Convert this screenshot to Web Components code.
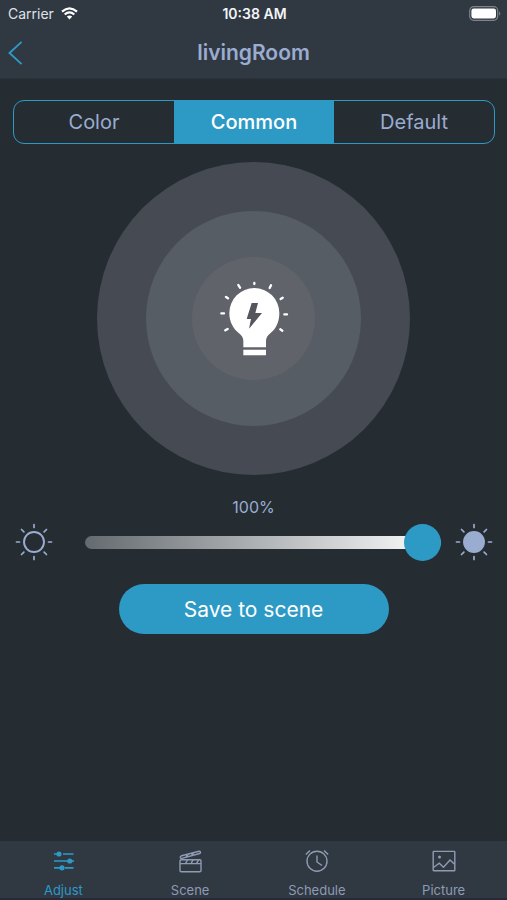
<!DOCTYPE html>
<html lang="en">
<head>
<meta charset="utf-8">
<meta name="viewport" content="width=device-width, initial-scale=1">
<title>livingRoom</title>
<style>
  :root {
    --page: #252d33;
    --bar: #303842;
    --accent: #2d9ac6;
    --text: #9aacd0;
    --muted: #8e9bb3;
  }
  html, body { margin: 0; }
  body {
    background: var(--page);
    color: var(--text);
    font-family: Inter, Roboto, "Liberation Sans", sans-serif;
  }
</style>
</head>
<body>
<light-app></light-app>

<script>
  const define = (name, html, setup) => {
    const template = document.createElement('template');
    template.innerHTML = html;
    customElements.define(name, class extends HTMLElement {
      constructor() {
        super();
        this.attachShadow({ mode: 'open' }).append(template.content.cloneNode(true));
      }
      connectedCallback() {
        if (setup && !this.ready) { this.ready = true; setup(this, this.shadowRoot); }
      }
    });
  };

  define('status-bar', `
    <style>
      :host { display: grid; grid-template-columns: 1fr auto 1fr; align-items: center; height: 27px; padding: 0 6px 0 8px; color: #f2f4f7; font-size: 14px; line-height: 16px; }
      .carrier { display: flex; align-items: center; gap: 7px; color: #dfe3e8; }
      .time { font-weight: 600; }
      .battery { justify-self: end; }
      svg { display: block; }
    </style>
    <div class="carrier"><span>Carrier</span>
      <svg width="17" height="13" viewBox="0 0 17 13" aria-label="Wi-Fi">
        <g fill="none" stroke="#fff" stroke-width="2.3">
          <path d="M1 4.6Q8.500-1.900 16 4.600"/><path d="M3.700 7.500Q8.500 3.300 13.300 7.500"/>
        </g>
        <path d="M8.500 12.400L5.800 9.600Q8.500 7.400 11.200 9.600Z" fill="#fff"/>
      </svg>
    </div>
    <span class="time">10:38 AM</span>
    <svg class="battery" width="32" height="15" viewBox="0 0 32 15" aria-label="Battery full">
      <rect x=".7" y=".7" width="28" height="13.600" rx="4" fill="none" stroke="#7c838b" stroke-width="1.200"/>
      <rect x="2.400" y="2.400" width="24.600" height="10" rx="2.300" fill="#fff"/>
      <path d="M30.200 5.200Q32.500 7.500 30.200 9.800Z" fill="#7c838b"/>
    </svg>`);

  define('nav-header', `
    <style>
      :host { display: grid; grid-template-columns: 1fr auto 1fr; align-items: center; height: 51px; padding: 0 8px; }
      button { justify-self: start; margin: 0; padding: 0; border: 0; background: none; color: var(--accent); cursor: pointer; }
      svg { display: block; }
      h1 { margin: 0; font-size: 21px; line-height: 24px; font-weight: 600; }
    </style>
    <button type="button" aria-label="Back"><svg width="15" height="24" viewBox="0 0 15 24" fill="none" stroke="currentColor" stroke-width="1.900"><path d="M13.600.9L1.500 12l12.100 11.100"/></svg></button>
    <h1><slot></slot></h1>`);

  define('segmented-control', `
    <style>
      :host { display: grid; grid-auto-flow: column; grid-auto-columns: 1fr; height: 42px; overflow: hidden; border: 1px solid var(--accent); border-radius: 11px; }
      button { margin: 0; padding: 0; border: 0; background: none; color: var(--text); font-family: inherit; font-size: 20px; line-height: 24px; cursor: pointer; }
      button[aria-pressed="true"] { background: var(--accent); color: #fff; font-weight: 500; }
    </style>
    <button type="button" aria-pressed="false">Color</button>
    <button type="button" aria-pressed="true">Common</button>
    <button type="button" aria-pressed="false">Default</button>`,
    (host, root) => {
      const buttons = [...root.querySelectorAll('button')];
      buttons.forEach(b => b.addEventListener('click', () =>
        buttons.forEach(o => o.setAttribute('aria-pressed', String(o === b)))));
    });

  define('light-dial', `
    <style>
      :host { display: block; width: 65%; max-width: 313px; }
      div { display: grid; place-items: center; box-sizing: border-box; aspect-ratio: 1; border-radius: 50%; }
      .outer { width: 100%; background: #464b53; }
      .middle { width: 69%; background: #575d65; }
      .inner { width: 57%; background: #61636b; }
      svg { display: block; }
    </style>
    <div class="outer"><div class="middle"><div class="inner">
      <svg width="70" height="77" viewBox="105 90 210 231" aria-label="Light on">
        <path fill="#fff" d="M211 114a75 75 0 0 1 75 75c0 28-11 48-27 61q-13 9-13 24v18h-68v-18q0-15-13-24c-16-13-29-33-29-61a75 75 0 0 1 75-75ZM178 299h68v17h-68Z"/>
        <path fill="#53565d" d="M203 159h19l-8 30h20l-39 47 6-29h-13Z"/>
        <g stroke="#fff" stroke-width="7" stroke-linecap="round"><path d="M211 99v3M163 105l5 8M261 106l-4 8M126 141l6 4M296 143l-6 4M112 190h8M301 193h8M124 241l7-4M289 238l6 4"/></g>
      </svg>
    </div></div></div>`);

  define('sun-icon', `
    <style>
      :host { display: block; }
      svg { display: block; color: var(--text); }
      circle { fill: none; }
      :host([filled]) circle { fill: currentColor; }
    </style>
    <svg width="38" height="38" viewBox="-19 -19 38 38" fill="none" stroke="currentColor" stroke-width="1.900" aria-hidden="true">
      <circle r="10"/>
      <path stroke-linecap="round" stroke-width="1.700" d="M0-17.500v3M0 14.500v3M-17.500 0h3M14.500 0h3M-12.500-12.500l2.400 2.400M12.500-12.500l-2.400 2.400M-12.500 12.500l2.400-2.400M12.500 12.500l-2.400-2.400"/>
    </svg>`);

  define('brightness-slider', `
    <style>
      :host { display: flex; flex-direction: column; }
      label { text-align: center; font-size: 16px; line-height: 20px; }
      .row { display: flex; align-items: center; padding: 0 14px 0 15px; margin-top: 6px; }
      input { -webkit-appearance: none; appearance: none; flex: 1; min-width: 0; height: 37px; margin: 0 14px 0 32px; background: none; cursor: pointer; }
      input::-webkit-slider-runnable-track { height: 13px; border-radius: 7px; background: linear-gradient(90deg, #646a6f, #fff); }
      input::-webkit-slider-thumb { -webkit-appearance: none; width: 37px; height: 37px; margin-top: -12px; border-radius: 50%; background: var(--accent); }
      input::-moz-range-track { height: 13px; border-radius: 7px; background: linear-gradient(90deg, #646a6f, #fff); }
      input::-moz-range-thumb { width: 37px; height: 37px; border: 0; border-radius: 50%; background: var(--accent); }
    </style>
    <label for="level">100%</label>
    <div class="row">
      <sun-icon></sun-icon>
      <input id="level" type="range" min="0" max="100" value="100">
      <sun-icon filled></sun-icon>
    </div>`,
    (host, root) => {
      const input = root.querySelector('input');
      input.addEventListener('input', () => { root.querySelector('label').textContent = input.value + '%'; });
    });

  define('pill-button', `
    <style>
      :host { display: block; width: 270px; max-width: 100%; }
      button { width: 100%; margin: 0; padding: 13px 24px 11px; border: 0; border-radius: 25px; background: var(--accent); color: #fff; font-family: inherit; font-size: 21px; line-height: 26px; cursor: pointer; }
    </style>
    <button type="button"><slot></slot></button>`);

  define('tab-item', `
    <style>
      :host { display: block; color: var(--muted); }
      :host([active]) { color: var(--accent); }
      a { display: flex; flex-direction: column; align-items: center; gap: 9px; padding: 8px 0 0; color: inherit; text-decoration: none; font-size: 13px; line-height: 16px; }
      ::slotted(svg) { display: block; width: 24px; height: 24px; }
    </style>
    <a href="#"><slot name="icon"></slot><span><slot></slot></span></a>`);

  define('tab-bar', `
    <style>
      :host { display: block; background: var(--bar); border-bottom: 2px solid #29283a; }
      nav { display: grid; grid-template-columns: repeat(4, 1fr); }
      svg { fill: none; stroke: currentColor; stroke-width: 1.400; }
    </style>
    <nav>
      <tab-item active>
        <svg slot="icon" viewBox="0 0 24 24"><path stroke-width="1.700" d="M3 5h5M12 5h10.500M3 12h18M20.500 12h2.500M3 18.800h7M14 18.800h8.500"/><g fill="currentColor" stroke="none"><circle cx="8" cy="5" r="2.600"/><circle cx="18.800" cy="12" r="2.600"/><circle cx="11" cy="18.800" r="2.600"/></g></svg>Adjust</tab-item>
      <tab-item>
        <svg slot="icon" viewBox="0 0 24 24"><rect x="2" y="10.800" width="21" height="12" rx="1.200"/><path d="M2 14.600h21M7.500 14.600l2-3.800M13 14.600l2-3.800M18.500 14.600l2-3.800"/><path d="M3.600 6.700L21 2.200Q22.300 2 22.500 3.200Q22.600 4.200 21.600 4.500L4 9.400Q2.500 9.600 2.200 8.400Q2.100 7.100 3.600 6.700ZM8 8l2.400-3M13.500 6.500l2.400-3"/></svg>Scene</tab-item>
      <tab-item>
        <svg slot="icon" viewBox="0 0 24 24"><circle cx="12" cy="12.200" r="10"/><path d="M12 6.500v6.500l5 3.500M.8 5.600L5 1.400M23.200 5.600L19 1.400"/></svg>Schedule</tab-item>
      <tab-item>
        <svg slot="icon" viewBox="0 0 24 24"><rect x="1.200" y="2.400" width="21.600" height="19.400" rx=".6"/><circle cx="7.500" cy="8" r="1.500" fill="currentColor" stroke="none"/><path d="M1.500 18.500l5.800-4.300 4.200 4 6.500-7.200 4.600 4.300"/></svg>Picture</tab-item>
    </nav>`);

  define('light-app', `
    <style>
      :host { display: flex; flex-direction: column; min-height: 100vh; }
      header { background: var(--bar); border-bottom: 1px solid #2b333b; }
      main { flex: 1; display: flex; flex-direction: column; }
      segmented-control { margin: 21px 12px 0 13px; }
      light-dial { margin: 18px auto 0; }
      brightness-slider { margin-top: 22px; }
      pill-button { margin: 23px auto; }
    </style>
    <header>
      <status-bar></status-bar>
      <nav-header>livingRoom</nav-header>
    </header>
    <main>
      <segmented-control></segmented-control>
      <light-dial></light-dial>
      <brightness-slider></brightness-slider>
      <pill-button>Save to scene</pill-button>
    </main>
    <tab-bar></tab-bar>`);
</script>
</body>
</html>
